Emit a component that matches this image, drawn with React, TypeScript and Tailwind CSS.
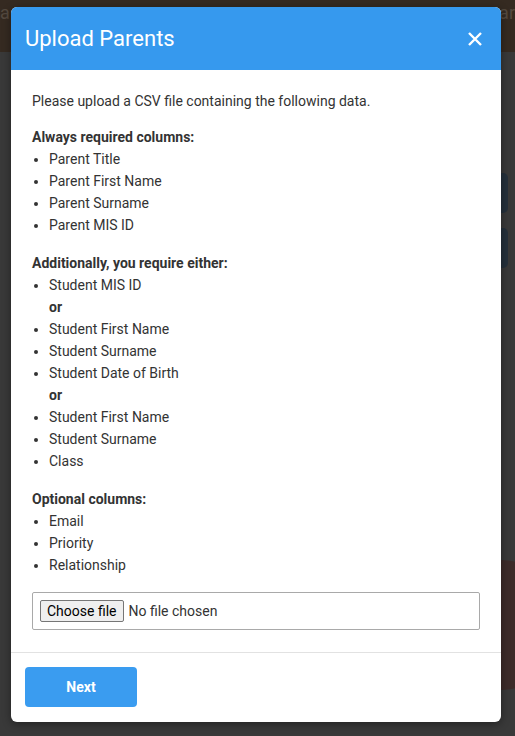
import React from "react";

const sections = [
  {
    title: "Always required columns:",
    items: ["Parent Title", "Parent First Name", "Parent Surname", "Parent MIS ID"],
  },
  {
    title: "Additionally, you require either:",
    items: [
      "Student MIS ID",
      "or",
      "Student First Name",
      "Student Surname",
      "Student Date of Birth",
      "or",
      "Student First Name",
      "Student Surname",
      "Class",
    ],
  },
  {
    title: "Optional columns:",
    items: ["Email", "Priority", "Relationship"],
  },
];

export default function App() {
  return (
    <div
      className="relative h-[736px] w-full overflow-hidden bg-[#393939]"
      style={{ fontFamily: "Roboto, 'Liberation Sans', sans-serif" }}
    >
      {/* page behind the overlay */}
      <div className="flex h-[52px] items-start justify-between bg-[#352a21] pt-[1px] text-[18px] leading-[24px] text-[#54493f]">
        <span>a</span>
        <span>ar</span>
      </div>
      <div className="absolute right-[7px] top-[173px] h-[40px] w-[30px] rounded-[5px] bg-[#25303b]" />
      <div className="absolute right-[7px] top-[228px] h-[40px] w-[30px] rounded-[5px] bg-[#25303b]" />
      <div className="absolute -right-[50px] top-[560px] h-[130px] w-[130px] rounded-full bg-[#3d2b29]" />

      {/* modal */}
      <div className="absolute inset-0 px-[11px] pt-[7px]">
        <div className="w-[490px] overflow-hidden rounded-[6px] bg-white shadow-[0_2px_8px_rgba(0,0,0,0.4)]">
          <div className="flex h-[63px] items-center justify-between bg-[#3699ee] pl-[14px] pr-[19px]">
            <h3 className="text-[22px] font-normal leading-[28px] text-white">Upload Parents</h3>
            <button className="text-white">
              <svg width="14" height="14" viewBox="0 0 14 14" fill="none" stroke="currentColor" strokeWidth="2.4">
                <path d="M1 1L13 13M13 1L1 13" />
              </svg>
            </button>
          </div>

          <div className="px-[21px] pb-[22px] pt-[20px] text-[14px] leading-[22px] text-[#333]">
            <p className="mb-[14px]">Please upload a CSV file containing the following data.</p>
            {sections.map((s) => (
              <div key={s.title} className="mb-[16px] last:mb-[17px]">
                <div className="font-bold">{s.title}</div>
                <ul className="list-disc pl-[17px]">
                  {s.items.map((it, i) =>
                    it === "or" ? (
                      <li key={i} className="list-none font-bold">
                        or
                      </li>
                    ) : (
                      <li key={i}>{it}</li>
                    )
                  )}
                </ul>
              </div>
            ))}
            <label className="flex h-[38px] cursor-pointer items-center rounded-[2px] border border-[#a9a9a9] px-[7px] text-[14px]">
              <input type="file" className="hidden" />
              <span className="mr-[5px] rounded-[2px] border border-[#767676] bg-[#efefef] px-[6px] py-[1px] leading-[18px] text-black">
                Choose file
              </span>
              <span className="text-[#333]">No file chosen</span>
            </label>
          </div>

          <div className="border-t border-[#e2e2e2] px-[14px] pb-[15px] pt-[14px]">
            <button className="h-[40px] w-[112px] rounded-[4px] bg-[#3a9cf0] text-[14px] font-bold text-white">
              Next
            </button>
          </div>
        </div>
      </div>
    </div>
  );
}
